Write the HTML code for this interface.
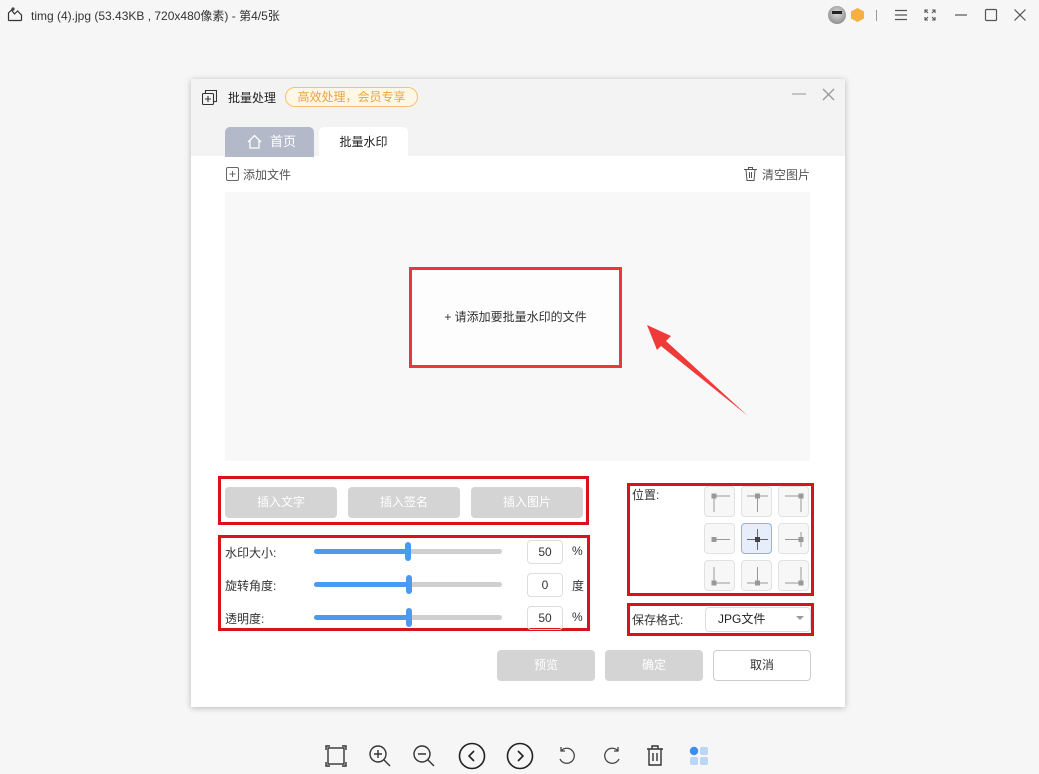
<!DOCTYPE html>
<html><head><meta charset="utf-8">
<style>
*{margin:0;padding:0;box-sizing:border-box}
body{width:1039px;height:774px;background:#f6f6f6;font-family:"Liberation Sans","Noto Sans CJK SC",sans-serif;font-size:12px;color:#333;position:relative;overflow:hidden}
.a{position:absolute}
.dlg{left:191px;top:79px;width:654px;height:628px;background:#fff;box-shadow:0 1px 6px rgba(0,0,0,.25)}
.hd{left:0;top:0;width:654px;height:77px;background:#f3f3f3}
.btn{position:absolute;height:31px;border-radius:4px;background:#d4d4d4;color:#fff;text-align:center;line-height:31px;font-size:12px}
.red{position:absolute;border:3px solid #d9121b}
.lbl{position:absolute;font-size:12px;color:#333}
.track{position:absolute;height:5px;border-radius:3px;background:#cfcfcf;width:188px;left:314px}
.fill{position:absolute;left:0;top:0;height:5px;border-radius:3px;background:#4a9af0}
.thumb{position:absolute;width:6px;height:19px;border-radius:3px;background:#4a9af0;top:-7px}
.inp{position:absolute;width:36px;height:24px;border:1px solid #ddd;border-radius:4px;text-align:center;line-height:22px;font-size:12px;left:527px}
.cell{position:absolute;width:31px;height:31px;border:1px solid #e2e2e2;border-radius:4px;background:#f7f7f7}
.cell svg{position:absolute;left:0;top:0}
</style></head><body>
<!-- title bar -->
<svg class="a" style="left:7px;top:6px" width="16" height="16" viewBox="0 0 16 16" fill="none" stroke="#333" stroke-width="1.2"><path d="M1.5 14.5h13M1.5 14.5V7l3-3 3 4 3-3 4 4v5.5"/><circle cx="6" cy="3" r="1"/></svg>
<div class="a" style="left:31px;top:7px;font-size:12px;color:#333">timg (4).jpg (53.43KB , 720x480像素) - 第4/5张</div>
<div class="a" style="left:828px;top:6px;width:18px;height:18px;border-radius:9px;background:radial-gradient(circle at 50% 40%,#ddd,#777)"></div>
<div class="a" style="left:832px;top:11px;width:10px;height:3px;background:#222"></div>
<div class="a" style="left:851px;top:8px;width:13px;height:14px;background:#f5b041;clip-path:polygon(50% 0,100% 25%,100% 75%,50% 100%,0 75%,0 25%)"></div>
<div class="a" style="left:876px;top:10px;width:1px;height:11px;background:#999"></div>
<svg class="a" style="left:894px;top:9px" width="14" height="12" stroke="#555" stroke-width="1.2"><path d="M1 1.5h12M1 6h12M1 10.5h12"/></svg>
<svg class="a" style="left:924px;top:9px" width="12" height="12" stroke="#555" stroke-width="1.1" fill="none"><path d="M1 4V1h3M8 1h3v3M11 8v3H8M4 11H1V8M1 1l3 3M11 1 8 4M11 11 8 8M1 11l3-3"/></svg>
<svg class="a" style="left:954px;top:9px" width="14" height="12" stroke="#555" stroke-width="1.2"><path d="M1 6h12"/></svg>
<svg class="a" style="left:984px;top:8px" width="14" height="14" stroke="#555" stroke-width="1.2" fill="none"><rect x="1.5" y="1.5" width="11" height="11" rx="1"/></svg>
<svg class="a" style="left:1013px;top:8px" width="14" height="14" stroke="#555" stroke-width="1.2"><path d="M1.5 1.5l11 11M12.5 1.5l-11 11"/></svg>

<div class="a dlg">
 <div class="a hd"></div>
 <svg class="a" style="left:11px;top:11px" width="15" height="15" fill="none" stroke="#333" stroke-width="1.1"><rect x="0.5" y="3.5" width="11" height="11" rx="1"/><path d="M3.5 3.5V.5h11v11h-3M6 6v6M3 9h6"/></svg>
 <div class="lbl" style="left:37px;top:10px;color:#222">批量处理</div>
 <div class="a" style="left:94px;top:8px;width:133px;height:20px;border:1px solid #f3c46c;border-radius:10px;background:#fff7e6;color:#f0a33a;text-align:center;line-height:18px;font-size:12px">高效处理，会员专享</div>
 <svg class="a" style="left:601px;top:12px" width="14" height="6" stroke="#aaa" stroke-width="1.3"><path d="M0 3h14"/></svg>
 <svg class="a" style="left:631px;top:9px" width="13" height="13" stroke="#999" stroke-width="1.3"><path d="M1 1l11 11M12 1 1 12"/></svg>
 <div class="a" style="left:34px;top:48px;width:89px;height:30px;background:#b3b9c8;border-radius:5px 5px 0 0;color:#fff;line-height:30px;font-size:13px">
  <svg class="a" style="left:22px;top:7px" width="15" height="15" fill="none" stroke="#fff" stroke-width="1.3"><path d="M1 8 7.5 1.5 14 8M3 6.5V14h9V6.5"/></svg>
  <span class="a" style="left:45px;top:0">首页</span></div>
 <div class="a" style="left:128px;top:48px;width:89px;height:30px;background:#fff;border-radius:5px 5px 0 0;text-align:center;line-height:30px;font-size:12px;color:#222">批量水印</div>
 <svg class="a" style="left:35px;top:88px" width="13" height="14" fill="none" stroke="#666" stroke-width="1"><rect x="0.5" y="0.5" width="12" height="13" rx="1.5"/><path d="M6.5 4v6M3.5 7h6"/></svg>
 <div class="lbl" style="left:52px;top:87px;color:#555">添加文件</div>
 <svg class="a" style="left:553px;top:88px" width="13" height="14" fill="none" stroke="#555" stroke-width="1"><path d="M0 2.5h13M4.5 2.5V.5h4v2M2 2.5l1 11h7l1-11M5.5 5v6M7.5 5v6"/></svg>
 <div class="lbl" style="left:571px;top:87px;color:#555">清空图片</div>
 <div class="a" style="left:34px;top:113px;width:585px;height:269px;background:#f8f8f8"></div>
 <div class="a" style="left:218px;top:188px;width:213px;height:101px;border:3px solid #e53a3a;background:#fdfdfd;text-align:center;line-height:95px;font-size:12px;color:#333">+ 请添加要批量水印的文件</div>
 <svg class="a" style="left:450px;top:240px" width="110" height="100"><polygon points="6,6 30,17 25,22 107,97 20,27 16,31" fill="#f03a3a"/></svg>

 <div class="red" style="left:27px;top:397px;width:371px;height:49px"></div>
 <div class="btn" style="left:34px;top:408px;width:112px">插入文字</div>
 <div class="btn" style="left:157px;top:408px;width:112px">插入签名</div>
 <div class="btn" style="left:280px;top:408px;width:112px">插入图片</div>

 <div class="red" style="left:27px;top:456px;width:372px;height:96px"></div>
 <div class="lbl" style="left:34px;top:465px">水印大小:</div>
 <div class="track" style="left:123px;top:470px"><div class="fill" style="width:94px"></div><div class="thumb" style="left:91px"></div></div>
 <div class="inp" style="left:336px;top:461px">50</div><div class="lbl" style="left:381px;top:465px">%</div>
 <div class="lbl" style="left:34px;top:498px">旋转角度:</div>
 <div class="track" style="left:123px;top:503px"><div class="fill" style="width:95px"></div><div class="thumb" style="left:92px"></div></div>
 <div class="inp" style="left:336px;top:494px">0</div><div class="lbl" style="left:381px;top:498px">度</div>
 <div class="lbl" style="left:34px;top:531px">透明度:</div>
 <div class="track" style="left:123px;top:536px"><div class="fill" style="width:95px"></div><div class="thumb" style="left:92px"></div></div>
 <div class="inp" style="left:336px;top:527px">50</div><div class="lbl" style="left:381px;top:531px">%</div>

 <div class="red" style="left:436px;top:404px;width:187px;height:113px"></div>
 <div class="lbl" style="left:441px;top:407px">位置:</div>
 <!-- grid -->
 <div class="cell" style="left:513px;top:407px"><svg width="31" height="31" stroke="#999"><path d="M9 9h16M9 9v16"/><rect x="6.5" y="6.5" width="5" height="5" fill="#999" stroke="none"/></svg></div>
 <div class="cell" style="left:550px;top:407px"><svg width="31" height="31" stroke="#999"><path d="M5 9h21M15.5 9v16"/><rect x="13" y="6.5" width="5" height="5" fill="#999" stroke="none"/></svg></div>
 <div class="cell" style="left:587px;top:407px"><svg width="31" height="31" stroke="#999"><path d="M6 9h16M22 9v16"/><rect x="19.5" y="6.5" width="5" height="5" fill="#999" stroke="none"/></svg></div>
 <div class="cell" style="left:513px;top:444px"><svg width="31" height="31" stroke="#999"><path d="M9 15.5h16"/><rect x="6.5" y="13" width="5" height="5" fill="#999" stroke="none"/></svg></div>
 <div class="cell" style="left:550px;top:444px;background:#e5eefa;border-color:#8eb4e0"><svg width="31" height="31" stroke="#666"><path d="M5 15.5h21M15.5 5v21"/><rect x="13" y="13" width="5" height="5" fill="#444" stroke="none"/></svg></div>
 <div class="cell" style="left:587px;top:444px"><svg width="31" height="31" stroke="#999"><path d="M6 15.5h16M22 8v15"/><rect x="19.5" y="13" width="5" height="5" fill="#999" stroke="none"/></svg></div>
 <div class="cell" style="left:513px;top:481px"><svg width="31" height="31" stroke="#999"><path d="M9 22h16M9 6v16"/><rect x="6.5" y="19.5" width="5" height="5" fill="#999" stroke="none"/></svg></div>
 <div class="cell" style="left:550px;top:481px"><svg width="31" height="31" stroke="#999"><path d="M5 22h21M15.5 6v16"/><rect x="13" y="19.5" width="5" height="5" fill="#999" stroke="none"/></svg></div>
 <div class="cell" style="left:587px;top:481px"><svg width="31" height="31" stroke="#999"><path d="M6 22h16M22 6v16"/><rect x="19.5" y="19.5" width="5" height="5" fill="#999" stroke="none"/></svg></div>

 <div class="red" style="left:436px;top:524px;width:187px;height:33px"></div>
 <div class="lbl" style="left:441px;top:532px">保存格式:</div>
 <div class="a" style="left:514px;top:528px;width:106px;height:25px;border:1px solid #ddd;border-radius:4px;background:#fff;line-height:23px;padding-left:12px;font-size:12px;color:#222">JPG文件</div>
 <svg class="a" style="left:605px;top:537px" width="8" height="5"><polygon points="0,0 8,0 4,4" fill="#999"/></svg>

 <div class="btn" style="left:306px;top:571px;width:98px">预览</div>
 <div class="btn" style="left:414px;top:571px;width:98px">确定</div>
 <div class="a" style="left:522px;top:571px;width:98px;height:31px;border:1px solid #ccc;border-radius:4px;text-align:center;line-height:29px;color:#333">取消</div>
</div>

<!-- bottom toolbar -->
<svg class="a" style="left:325px;top:745px" width="22" height="22" fill="none" stroke="#333" stroke-width="1.4"><path d="M1 5V1h4M17 1h4v4M21 17v4h-4M5 21H1v-4"/><rect x="3" y="3" width="16" height="16"/></svg>
<svg class="a" style="left:368px;top:744px" width="24" height="24" fill="none" stroke="#333" stroke-width="1.4"><circle cx="10" cy="10" r="8"/><path d="M16 16l6 6M10 6v8M6 10h8"/></svg>
<svg class="a" style="left:412px;top:744px" width="24" height="24" fill="none" stroke="#333" stroke-width="1.4"><circle cx="10" cy="10" r="8"/><path d="M16 16l6 6M6 10h8"/></svg>
<svg class="a" style="left:458px;top:742px" width="28" height="28" fill="none" stroke="#222" stroke-width="1.6"><circle cx="14" cy="14" r="12.5"/><path d="M16 9l-5 5 5 5"/></svg>
<svg class="a" style="left:506px;top:742px" width="28" height="28" fill="none" stroke="#222" stroke-width="1.6"><circle cx="14" cy="14" r="12.5"/><path d="M12 9l5 5-5 5"/></svg>
<svg class="a" style="left:557px;top:746px" width="20" height="20" fill="none" stroke="#444" stroke-width="1.3"><path d="M4 5a7.5 7.5 0 1 1-1 8M4 1v4h4"/></svg>
<svg class="a" style="left:602px;top:746px" width="20" height="20" fill="none" stroke="#444" stroke-width="1.3"><path d="M16 5a7.5 7.5 0 1 0 1 8M16 1v4h-4"/></svg>
<svg class="a" style="left:646px;top:745px" width="18" height="21" fill="none" stroke="#333" stroke-width="1.4"><path d="M1 4h16M6 4V1h6v3M3 4v16h12V4M7 8v8M11 8v8"/></svg>
<svg class="a" style="left:689px;top:746px" width="20" height="20"><circle cx="5" cy="5" r="4.2" fill="#3b8ff0"/><rect x="11" y="1" width="8" height="8" rx="2" fill="#bcd6f7"/><rect x="1" y="11" width="8" height="8" rx="2" fill="#bcd6f7"/><rect x="11" y="11" width="8" height="8" rx="2" fill="#bcd6f7"/></svg>
</body></html>
